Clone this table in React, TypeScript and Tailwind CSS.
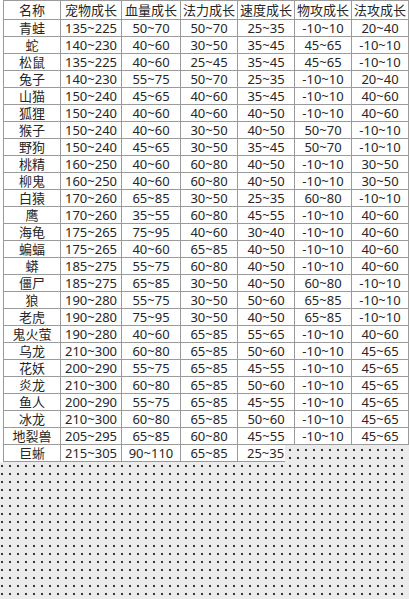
const rows: string[][] = [
  ['青蛙', '135~225', '50~70', '50~70', '25~35', '-10~10', '20~40'],
  ['蛇', '140~230', '40~60', '30~50', '35~45', '45~65', '-10~10'],
  ['松鼠', '135~225', '40~60', '25~45', '35~45', '45~65', '-10~10'],
  ['兔子', '140~230', '55~75', '50~70', '25~35', '-10~10', '20~40'],
  ['山猫', '150~240', '45~65', '40~60', '35~45', '-10~10', '40~60'],
  ['狐狸', '150~240', '40~60', '40~60', '40~50', '-10~10', '40~60'],
  ['猴子', '150~240', '40~60', '30~50', '40~50', '50~70', '-10~10'],
  ['野狗', '150~240', '45~65', '30~50', '35~45', '50~70', '-10~10'],
  ['桃精', '160~250', '40~60', '60~80', '40~50', '-10~10', '30~50'],
  ['柳鬼', '160~250', '40~60', '60~80', '40~50', '-10~10', '30~50'],
  ['白猿', '170~260', '65~85', '30~50', '25~35', '60~80', '-10~10'],
  ['鹰', '170~260', '35~55', '60~80', '45~55', '-10~10', '40~60'],
  ['海龟', '175~265', '75~95', '40~60', '30~40', '-10~10', '40~60'],
  ['蝙蝠', '175~265', '40~60', '65~85', '40~50', '-10~10', '40~60'],
  ['蟒', '185~275', '55~75', '60~80', '40~50', '-10~10', '40~60'],
  ['僵尸', '185~275', '65~85', '30~50', '40~50', '60~80', '-10~10'],
  ['狼', '190~280', '55~75', '30~50', '50~60', '65~85', '-10~10'],
  ['老虎', '190~280', '75~95', '30~50', '40~50', '65~85', '-10~10'],
  ['鬼火萤', '190~280', '40~60', '65~85', '55~65', '-10~10', '40~60'],
  ['乌龙', '210~300', '60~80', '65~85', '50~60', '-10~10', '45~65'],
  ['花妖', '200~290', '55~75', '65~85', '45~55', '-10~10', '45~65'],
  ['炎龙', '210~300', '60~80', '65~85', '50~60', '-10~10', '45~65'],
  ['鱼人', '200~290', '55~75', '65~85', '45~55', '-10~10', '45~65'],
  ['冰龙', '210~300', '60~80', '65~85', '50~60', '-10~10', '45~65'],
  ['地裂兽', '205~295', '65~85', '60~80', '45~55', '-10~10', '45~65'],
];

const header = ['名称', '宠物成长', '血量成长', '法力成长', '速度成长', '物攻成长', '法攻成长'];

// column widths include the 1px right border
const widths = ['w-[57px]', 'w-[61px]', 'w-[59px]', 'w-[57px]', 'w-[57px]', 'w-[57px]', 'w-[57px]'];

function Cell({ text, w, tall }: { text: string; w: string; tall?: boolean }) {
  return (
    <div
      className={`${w} ${tall ? 'h-[18px]' : 'h-[16px]'} shrink-0 border-r border-[#9b9b9b] flex items-center justify-center`}
    >
      {text}
    </div>
  );
}

export default function App() {
  return (
    <div
      className="w-[409px] h-[599px] overflow-hidden bg-[#ececec] bg-[radial-gradient(circle_at_2px_2px,#3c3c3c_1px,transparent_1.6px)] bg-[length:8px_8px] text-[13px] leading-none text-[#262626]"
      style={{ fontFamily: '"Noto Sans", "Noto Sans CJK SC", sans-serif' }}
    >
      <div className="w-[409px] bg-white pl-[3px]">
        <div className="border-l border-t border-[#9b9b9b]">
          <div className="flex border-b border-[#9b9b9b]">
            {header.map((h, i) => (
              <Cell key={h} text={h} w={widths[i]} tall />
            ))}
          </div>
          {rows.map((r) => (
            <div key={r[0]} className="flex border-b border-[#9b9b9b]">
              {r.map((t, i) => (
                <Cell key={i} text={t} w={widths[i]} />
              ))}
            </div>
          ))}
        </div>
      </div>
      {/* last row, cut off in the source picture */}
      <div className="w-[285px] bg-white pl-[3px]">
        <div className="flex border-l border-b border-[#9b9b9b]">
          <Cell text="巨蜥" w="w-[57px]" />
          <Cell text="215~305" w="w-[61px]" />
          <Cell text="90~110" w="w-[59px]" />
          <Cell text="65~85" w="w-[57px]" />
          <div className="w-[47px] h-[16px] shrink-0 flex items-center pl-[9px] overflow-hidden">25~35</div>
        </div>
      </div>
    </div>
  );
}
